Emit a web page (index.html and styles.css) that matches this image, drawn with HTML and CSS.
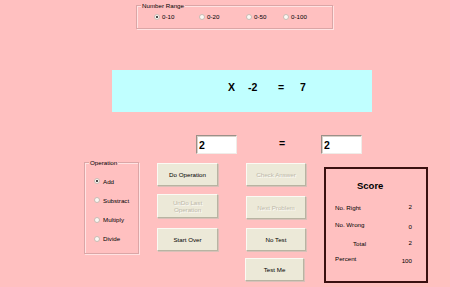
FILE: index.html
```html
<!DOCTYPE html>
<html>
<head>
<meta charset="utf-8">
<link rel="stylesheet" href="styles.css">
</head>
<body>
<div class="range group">
  <div class="legend">Number Range</div>
  <div class="opts">
    <label class="opt w45"><span class="radio on"></span>0-10</label>
    <label class="opt w47"><span class="radio"></span>0-20</label>
    <label class="opt w37"><span class="radio"></span>0-50</label>
    <label class="opt"><span class="radio"></span>0-100</label>
  </div>
</div>

<div class="problem">
  <span class="t1">X</span><span class="t2">-2</span><span class="t3">=</span><span>7</span>
</div>

<div class="answers">
  <input class="num" value="2" readonly>
  <span class="eqsign">=</span>
  <input class="num" value="2" readonly>
</div>

<div class="lower">
  <div class="ops group">
    <div class="legend">Operation</div>
    <div class="oplist">
      <label class="opt"><span class="radio on"></span>Add</label>
      <label class="opt"><span class="radio"></span>Substract</label>
      <label class="opt"><span class="radio"></span>Multiply</label>
      <label class="opt"><span class="radio"></span>Divide</label>
    </div>
  </div>

  <div class="col col1">
    <button class="btn b1">Do Operation</button>
    <button class="btn b2 dis">UnDo Last<br>Operation</button>
    <button class="btn b3">Start Over</button>
  </div>

  <div class="col col2">
    <button class="btn c1 dis">Check Answer</button>
    <button class="btn c2 dis">Next Problem</button>
    <button class="btn c3">No Test</button>
    <button class="btn c4">Test Me</button>
  </div>

  <div class="score">
    <div class="title">Score</div>
    <div class="row r1"><span class="lab">No. Right</span><span class="val up">2</span></div>
    <div class="row r2"><span class="lab">No. Wrong</span><span class="val down">0</span></div>
    <div class="row r3"><span class="lab indent">Total</span><span class="val up">2</span></div>
    <div class="row r4"><span class="lab">Percent</span><span class="val down">100</span></div>
  </div>
</div>
</body>
</html>
```

FILE: styles.css
```css
html, body {
  margin: 0;
  padding: 0;
}
body {
  width: 450px;
  height: 287px;
  overflow: hidden;
  background: #ffc0c0;
  font-family: "Liberation Sans", Arial, sans-serif;
  font-size: 6.2px;
  color: #000;
}

.group {
  box-sizing: border-box;
  border: 1px solid #dba6a6;
  box-shadow: 1px 1px 0 #ffe2e2, inset 1px 1px 0 #ffe2e2;
}
.legend {
  display: block;
  width: fit-content;
  height: 7px;
  line-height: 7px;
  margin-top: -4px;
  margin-left: 4px;
  padding: 0 1px;
  background: #ffc0c0;
}

.opt {
  display: flex;
  align-items: center;
  height: 7px;
  line-height: 7px;
  white-space: nowrap;
}
.radio {
  box-sizing: border-box;
  width: 6px;
  height: 6px;
  border-radius: 50%;
  border: 1px solid #c8bcb4;
  background: #fbf8f4;
  margin-right: 2px;
  display: flex;
  align-items: center;
  justify-content: center;
  flex: none;
}
.radio.on::after {
  content: "";
  width: 2px;
  height: 2px;
  border-radius: 50%;
  background: #111;
}

/* Number range */
.range {
  margin: 5px 0 0 136px;
  width: 197px;
  height: 24px;
}
.range .opts {
  display: flex;
  margin-top: 4px;
  padding-left: 17px;
}
.w45 { width: 45px; }
.w47 { width: 47px; }
.w37 { width: 37px; }

/* Problem */
.problem {
  box-sizing: border-box;
  margin: 41px 0 0 112px;
  width: 260px;
  height: 42px;
  background: #c0ffff;
  padding: 11px 0 0 116px;
  font-weight: bold;
  font-size: 10.5px;
  line-height: 12px;
  display: flex;
}
.t1 { width: 20px; }
.t2 { width: 30px; }
.t3 { width: 22px; }

/* Answers */
.answers {
  display: flex;
  align-items: center;
  margin: 23px 0 0 196px;
  height: 19px;
}
.num {
  box-sizing: border-box;
  width: 41px;
  height: 19px;
  margin: 0;
  padding: 0 2px;
  background: #fff;
  border: 1px solid;
  border-color: #9a9088 #f0ece8 #f0ece8 #9a9088;
  box-shadow: inset 1px 1px 0 #d8d0c8;
  font-family: "Liberation Sans", Arial, sans-serif;
  font-weight: bold;
  font-size: 10.5px;
  color: #000;
  outline: none;
}
.eqsign {
  box-sizing: border-box;
  width: 84px;
  padding-left: 42px;
  font-weight: bold;
  font-size: 10.5px;
  line-height: 12px;
  margin-top: -3px;
}

/* Lower area */
.lower {
  display: flex;
  align-items: flex-start;
  margin-top: 8px;
}
.ops {
  margin-left: 84px;
  width: 55px;
  height: 92px;
  flex: none;
}
.oplist {
  display: flex;
  flex-direction: column;
  gap: 12.3px;
  margin-top: 11.5px;
  padding-left: 9px;
}
.oplist .radio { margin-right: 3px; }

.col {
  display: flex;
  flex-direction: column;
  flex: none;
}
.col1 {
  margin-left: 18px;
  width: 61px;
  padding-top: 1px;
}
.col2 {
  margin-left: 28px;
  width: 60px;
  padding-top: 1px;
}
.btn {
  box-sizing: border-box;
  width: 100%;
  height: 23px;
  margin: 0;
  padding: 0;
  background: #ece9d8;
  border: 1px solid;
  border-color: #fbfaf4 #b8b4a2 #b8b4a2 #fbfaf4;
  box-shadow: 1px 1px 0 #d8c0b8;
  font-family: "Liberation Sans", Arial, sans-serif;
  font-size: 6.2px;
  line-height: 7px;
  color: #000;
  text-align: center;
}
.btn.dis {
  color: #bdb9aa;
  text-shadow: 1px 1px 0 #fdfcf8;
}
.b2 { margin-top: 8px; height: 24px; }
.b3 { margin-top: 10px; }
.c2 { margin-top: 10px; }
.c3 { margin-top: 9px; }
.c4 { margin-top: 7px; margin-left: -1px; width: 59px; }

/* Score */
.score {
  box-sizing: border-box;
  margin: 5px 0 0 18px;
  width: 104px;
  height: 116px;
  border: 2px solid #3a1010;
  flex: none;
  padding: 11px 14px 0 9px;
}
.title {
  font-weight: bold;
  font-size: 9.5px;
  line-height: 11px;
  padding-left: 22px;
}
.row {
  display: flex;
  justify-content: space-between;
  line-height: 7px;
  height: 7px;
}
.r1 { margin-top: 13px; }
.r2 { margin-top: 10px; }
.r3 { margin-top: 12px; }
.r4 { margin-top: 8px; }
.indent { padding-left: 18px; }
.val.up { margin-top: -1px; }
.val.down { margin-top: 2px; }
```
